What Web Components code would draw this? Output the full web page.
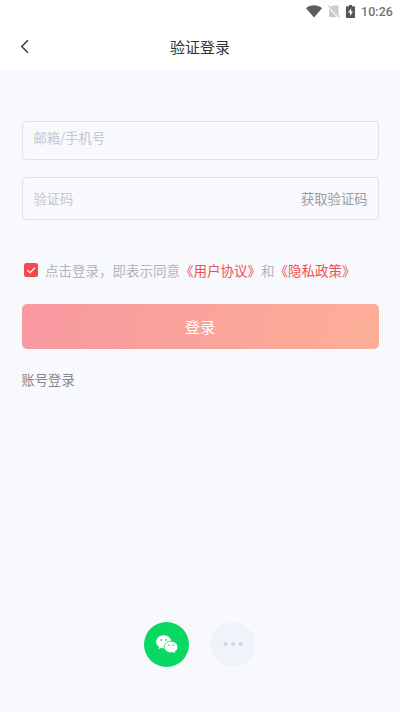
<!DOCTYPE html>
<html lang="zh-CN">
<head>
<meta charset="utf-8">
<title>验证登录</title>
<style>
html,body{margin:0;height:100%}
body{font-family:"Noto Sans CJK SC",sans-serif;background:#f8f9fd;overflow:hidden}
</style>
</head>
<body>
<login-screen></login-screen>
<script>
const define = (name, html) => customElements.define(name, class extends HTMLElement {
  constructor() {
    super();
    const t = document.createElement('template');
    t.innerHTML = html;
    this.attachShadow({mode: 'open'}).append(t.content.cloneNode(true));
  }
});

define('status-bar', `
<style>
:host{display:flex;height:22px;box-sizing:border-box;padding-right:7px;justify-content:flex-end;align-items:center;background:#fff;color:#727272;font:500 12.4px/22px Roboto,sans-serif}
svg{display:block;flex:none}
.wifi{margin-right:6px}.sim{margin-right:6px}.bat{margin-right:6px}
span{letter-spacing:.1px;padding-top:1px}
</style>
<svg class="wifi" width="16" height="13" viewBox="0 0 16 13"><path d="M0 3.200C4.600-.6 11.400-.6 16 3.200L8 12.500Z" fill="#5c5c5c"/></svg>
<svg class="sim" width="12" height="13" viewBox="0 0 12 13"><path d="M4.500.5H10.500V12H1V4Z" fill="#cbcbcb"/><path d="M.5 1.500 11 12.500" stroke="#fff" stroke-width="2.200"/><path d="M.5.8 11.500 12.300" stroke="#a6a6a6" stroke-width="1"/></svg>
<svg class="bat" width="9" height="13" viewBox="0 0 9 13"><path d="M3 0H6V1.200H8.200Q9 1.200 9 2V12.200Q9 13 8.200 13H.8Q0 13 0 12.200V2Q0 1.200.8 1.200H3Z" fill="#555"/><path d="M5.200 3.200 2 7.500H4V11L7 6.600H5.200Z" fill="#fff"/></svg>
<span>10:26</span>`);

define('nav-header', `
<style>
:host{display:grid;grid-template-columns:60px 1fr 60px;height:48px;background:#fff;align-items:center;color:#333}
svg{display:block;margin-left:20px}
div{text-align:center;font-size:15px;line-height:22px;padding-top:2px}
</style>
<svg width="10" height="15" viewBox="0 0 10 15"><path d="M8 1.200 1.700 7.500 8 13.800" fill="none" stroke="#333" stroke-width="1.350"/></svg>
<div><slot></slot></div>`);

define('text-field', `
<style>
:host{display:flex;box-sizing:border-box;border:1px solid #dfe2ea;border-radius:4px;justify-content:space-between;align-items:center;padding:0 10px 0 11px;font-size:13.3px;line-height:20px;color:#c5c7cd}
::slotted([slot=action]){color:#9b9da3}
</style>
<slot></slot><slot name="action"></slot>`);

define('check-box', `
<style>:host{display:block;width:14px;height:14px;flex:none}svg{display:block}</style>
<svg width="14" height="14" viewBox="0 0 14 14"><rect width="14" height="14" rx="2.500" fill="#f5484c"/><path d="M3.300 7 6 9.600 11 4.700" fill="none" stroke="#fff" stroke-width="1.200"/></svg>`);

define('terms-row', `
<style>
:host{display:flex;align-items:center;gap:7.500px;padding-left:2px;height:20px;font-size:13.5px;line-height:20px;color:#b3b5bb;white-space:nowrap}
p{margin:0}b{font-weight:400;color:#f04f54}
</style>
<check-box></check-box><p>点击登录，即表示同意<b>《用户协议》</b>和<b>《隐私政策》</b></p>`);

define('submit-button', `
<style>
:host{display:flex;height:45px;box-sizing:border-box;padding-bottom:2px;border-radius:5px;align-items:center;justify-content:center;color:#fff;font-size:15.300px;background:linear-gradient(105deg,#f89a9f 10%,#faa39b 50%,#fcad98 92%)}
</style><slot></slot>`);

define('social-button', `
<style>
:host{display:flex;width:45px;height:45px;border-radius:50%;align-items:center;justify-content:center;background:var(--fill)}
</style><slot></slot>`);

define('login-screen', `
<style>
:host{display:flex;flex-direction:column;height:712px;background:#f8f9fd}
main{display:flex;flex-direction:column;flex:1;padding:51px 21.500px 0}
.phone{height:39px;padding-bottom:5px}
.code{height:43px;margin-top:17px}
terms-row{margin-top:40px}
submit-button{margin-top:24px}
.account{font-size:13.300px;line-height:20px;color:#85878c;margin-top:20.500px}
footer{display:flex;justify-content:center;gap:21px;padding:0 1px 45.500px 0}
svg{display:block}
</style>
<status-bar></status-bar>
<nav-header>验证登录</nav-header>
<main>
<text-field class="phone">邮箱/手机号</text-field>
<text-field class="code">验证码<span slot="action">获取验证码</span></text-field>
<terms-row></terms-row>
<submit-button>登录</submit-button>
<div class="account">账号登录</div>
</main>
<footer>
<social-button style="--fill:#09d862"><svg width="22" height="19" viewBox="0 0 22 19">
<path d="M7.700.2C3.400.2.100 3.100.100 6.800c0 2.200 1.100 3.900 2.900 5.100L2.400 14.300 5.100 12.900c.8.300 1.700.500 2.600.500 4.300 0 7.600-2.900 7.600-6.600S12 .2 7.700.2Z" fill="#fff"/>
<path d="M15 6.200c-3.800 0-6.800 2.600-6.800 5.800s3 5.800 6.800 5.800c.8 0 1.600-.1 2.300-.3l2.300 1.300-.5-2.200c1.600-1.100 2.700-2.700 2.700-4.600 0-3.200-3-5.800-6.800-5.800Z" fill="#fff" stroke="#09d862" stroke-width=".8"/>
<g fill="#09d862"><circle cx="5.300" cy="4.900" r=".9"/><circle cx="10.200" cy="4.900" r=".9"/><circle cx="12.900" cy="10.200" r=".8"/><circle cx="17.200" cy="10.200" r=".8"/></g></svg></social-button>
<social-button style="--fill:#f1f3fb"><svg width="20" height="6" viewBox="0 0 20 6" fill="#d0d3df"><circle cx="2.500" cy="3" r="2.100"/><circle cx="10" cy="3" r="2.100"/><circle cx="17.500" cy="3" r="2.100"/></svg></social-button>
</footer>`);
</script>
</body>
</html>
